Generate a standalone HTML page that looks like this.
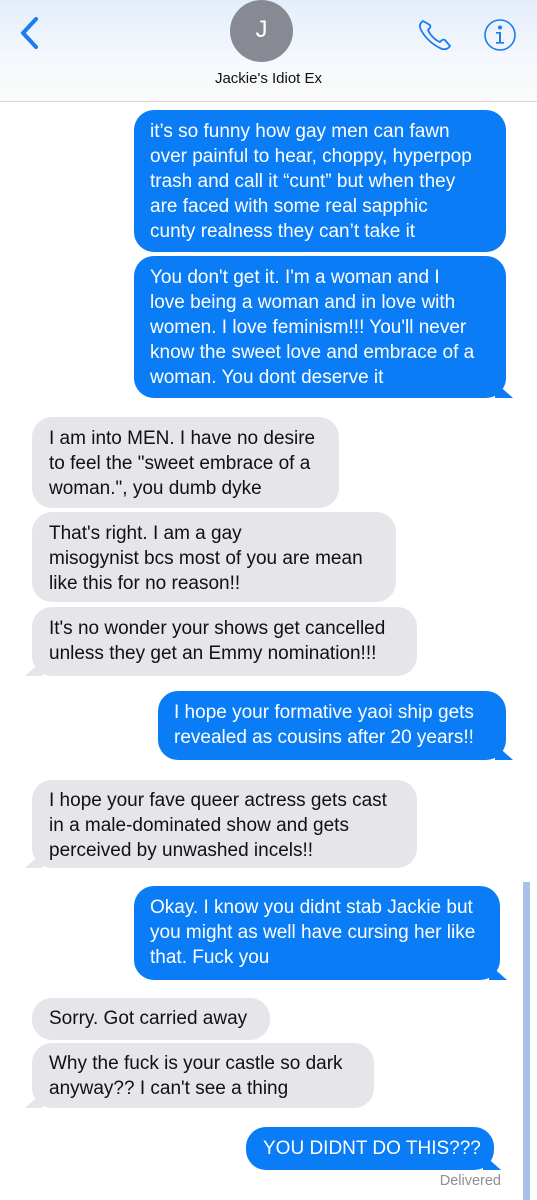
<!DOCTYPE html>
<html><head><meta charset="utf-8"><style>
*{margin:0;padding:0;box-sizing:border-box}
body{width:537px;height:1200px;background:#fff;position:relative;overflow:hidden;font-family:"Liberation Sans",sans-serif}
.hdr{position:absolute;left:0;top:0;width:537px;height:102px;background:linear-gradient(180deg,#e4eefb 0%,#f4f7fc 55%,#fafafa 100%);border-bottom:1px solid #d6d6d8}
.b{position:absolute;border-radius:20px;font-size:19px;line-height:25px;white-space:nowrap;letter-spacing:0}
.s{background:#0a7cf6;color:#fff}
.r{background:#e5e5ea;color:#111}
.tr::after{content:"";position:absolute;right:-7px;bottom:0;width:18px;height:16px;background:#0a7cf6;clip-path:polygon(0 0,100% 100%,0 100%)}
.tl::after{content:"";position:absolute;left:-7px;bottom:0;width:18px;height:16px;background:#e5e5ea;clip-path:polygon(100% 0,100% 100%,0 100%)}
</style></head><body>
<div class="hdr"></div>
<svg style="position:absolute;left:18px;top:16px" width="24" height="34" viewBox="0 0 24 34"><path d="M18 3 L5 17 L18 31" fill="none" stroke="#1a7cf0" stroke-width="4" stroke-linecap="round" stroke-linejoin="round"/></svg>
<div style="position:absolute;left:230px;top:0;width:63px;height:62px;border-radius:50%;background:#878a93;color:#fff;font-size:24px;text-align:center;line-height:60px">J</div>
<div style="position:absolute;left:0;width:537px;top:70px;text-align:center;font-size:15px;color:#111">Jackie's Idiot Ex</div>
<svg style="position:absolute;left:417px;top:17px" width="46" height="34" viewBox="0 0 46 34"><path d="M6 4 C3 6 2 9 4 13 C9 22 16 28 25 32 C29 33 32 31 33 29 L28 23 C26 22 25 23 23 25 C18 23 13 18 11 13 C13 11 14 10 13 8 Z" fill="none" stroke="#1a7cf0" stroke-width="1.8" stroke-linejoin="round"/></svg>
<svg style="position:absolute;left:483px;top:18px" width="34" height="34" viewBox="0 0 34 34"><circle cx="17" cy="17" r="15" fill="none" stroke="#1a7cf0" stroke-width="1.6"/><circle cx="17" cy="9.5" r="2" fill="#1a7cf0"/><path d="M13 14h5v10h3v1.6h-8V24h3v-8.4h-3z" fill="#1a7cf0"/></svg>

<div class="b s" style="left:134px;top:110px;width:372px;height:142px;padding:9px 0 0 16px">it’s so funny how gay men can fawn<br>over painful to hear, choppy, hyperpop<br>trash and call it “cunt” but when they<br>are faced with some real sapphic<br>cunty realness they can’t take it</div>
<div class="b s tr" style="left:134px;top:256px;width:372px;height:142px;padding:9px 0 0 16px">You don't get it. I'm a woman and I<br>love being a woman and in love with<br>women. I love feminism!!! You'll never<br>know the sweet love and embrace of a<br>woman. You dont deserve it</div>

<div class="b r" style="left:32px;top:417px;width:307px;height:91px;padding:9px 0 0 17px">I am into MEN. I have no desire<br>to feel the "sweet embrace of a<br>woman.", you dumb dyke</div>
<div class="b r" style="left:32px;top:512px;width:364px;height:90px;padding:9px 0 0 17px">That's right. I am a gay<br>misogynist bcs most of you are mean<br>like this for no reason!!</div>
<div class="b r tl" style="left:32px;top:607px;width:385px;height:69px;padding:9px 0 0 17px">It's no wonder your shows get cancelled<br>unless they get an Emmy nomination!!!</div>

<div class="b s tr" style="left:158px;top:691px;width:348px;height:69px;padding:9px 0 0 16px">I hope your formative yaoi ship gets<br>revealed as cousins after 20 years!!</div>

<div class="b r tl" style="left:32px;top:780px;width:385px;height:88px;padding:8px 0 0 17px">I hope your fave queer actress gets cast<br>in a male-dominated show and gets<br>perceived by unwashed incels!!</div>

<div class="b s tr" style="left:134px;top:886px;width:366px;height:94px;padding:9px 0 0 16px">Okay. I know you didnt stab Jackie but<br>you might as well have cursing her like<br>that. Fuck you</div>

<div class="b r" style="left:32px;top:998px;width:238px;height:42px;padding:8px 0 0 17px">Sorry. Got carried away</div>
<div class="b r tl" style="left:32px;top:1043px;width:342px;height:65px;padding:8px 0 0 17px">Why the fuck is your castle so dark<br>anyway?? I can't see a thing</div>

<div class="b s tr" style="left:246px;top:1127px;width:248px;height:43px;padding:9px 0 0 17px">YOU DIDNT DO THIS???</div>
<div style="position:absolute;right:36px;top:1173px;font-size:14.5px;color:#8e8e93">Delivered</div>

<div style="position:absolute;left:523px;top:882px;width:7px;height:318px;background:#a9c0e8"></div>
</body></html>
